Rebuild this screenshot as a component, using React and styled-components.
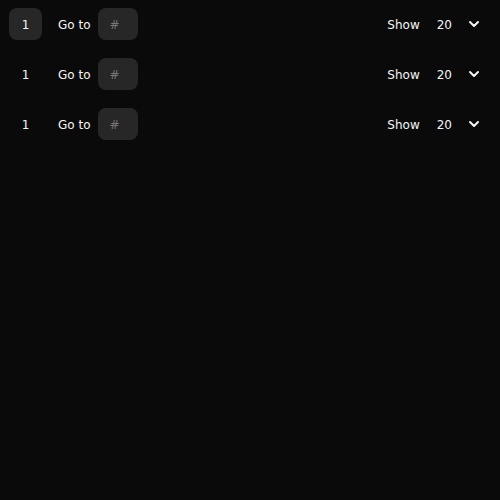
import styled, { createGlobalStyle } from "styled-components"
import { ChevronDown } from "lucide-react"

const GlobalStyle = createGlobalStyle`
html, body {
    margin: 0;
    padding: 0;
    background: #0a0a0a;
}
body {
    font-family: "DejaVu Sans", "Noto Sans", sans-serif;
    color: #f5f5f5;
}
`

const Page = styled.div`
min-height: 500px;
box-sizing: border-box;
padding: 8px 9px;
display: flex;
flex-direction: column;
gap: 18px;
`

const Row = styled.div`
display: flex;
align-items: center;
height: 32px;
`

const PageItem = styled.div`
width: 33px;
height: 32px;
box-sizing: border-box;
padding-top: 1px;
display: flex;
align-items: center;
justify-content: center;
border-radius: 8px;
background: ${props => (props.$active ? "#272727" : "transparent")};
font-size: 12px;
`

const GoTo = styled.label`
margin-left: 16px;
font-size: 12px;
display: flex;
align-items: center;
gap: 7px;
`

const Text = styled.span`
padding-top: 2px;
`

const Input = styled.input`
width: 40px;
height: 32px;
box-sizing: border-box;
border: none;
border-radius: 8px;
background: #272727;
color: #f5f5f5;
font-family: inherit;
font-size: 12px;
padding: 2px 12px 0;
outline: none;
&::placeholder {
    color: #777;
}
`

const Right = styled.div`
margin-left: auto;
display: flex;
align-items: center;
gap: 8px;
font-size: 12px;
`

const Select = styled.div`
display: flex;
align-items: center;
gap: 14px;
padding: 0 9px 0 9px;
height: 32px;
`

function Pager({ active }) {
    return (
        <Row>
            <PageItem $active={active}>1</PageItem>
            <GoTo>
                <Text>Go to</Text>
                <Input placeholder="#" />
            </GoTo>
            <Right>
                <Text>Show</Text>
                <Select>
                    <Text>20</Text>
                    <ChevronDown size={16} strokeWidth={3} />
                </Select>
            </Right>
        </Row>
    )
}

export default function App() {
    return (
        <>
            <GlobalStyle />
            <Page>
                <Pager active />
                <Pager />
                <Pager />
            </Page>
        </>
    )
}
